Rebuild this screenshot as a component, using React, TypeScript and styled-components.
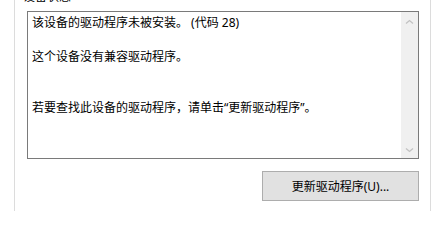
import React from 'react';
import styled, { createGlobalStyle } from 'styled-components';

const GlobalStyle = createGlobalStyle`
  html, body {
    margin: 0;
    background: #ffffff;
    overflow: hidden;
  }
  body {
    font-family: "Noto Sans", "Noto Sans CJK SC", sans-serif;
    font-size: 12px;
    color: #000000;
  }
`;

const Page = styled.div`
  height: 211px;
  padding-left: 14px;
  overflow: hidden;
`;

const GroupBox = styled.div`
  display: flex;
  flex-direction: column;
  box-sizing: border-box;
  width: 417px;
  height: 211px;
  padding: 0 11px 0 12px;
  border-left: 1px solid #dcdcdc;
  border-right: 1px solid #dcdcdc;
`;

const Caption = styled.div`
  margin: -9px 0 0 -4px;
  height: 12px;
  line-height: 12px;
  font-size: 12px;
`;

const MessageBox = styled.div`
  display: flex;
  box-sizing: border-box;
  height: 148px;
  margin-top: 8px;
  border: 1px solid #7a7a7a;
  background: #ffffff;
`;

const MessageText = styled.div`
  flex: 1;
  padding: 2px 4px;
  font-size: 12px;
  line-height: 17px;
  white-space: pre-wrap;
`;

const ScrollBar = styled.div`
  display: flex;
  flex-direction: column;
  justify-content: space-between;
  width: 17px;
  background: #f0f0f0;
`;

const ArrowButton = styled.div`
  display: flex;
  align-items: center;
  justify-content: center;
  height: 17px;
  padding-top: ${({ $down }: { $down?: boolean }) => ($down ? '0' : '2px')};
  box-sizing: border-box;
`;

const Footer = styled.div`
  display: flex;
  justify-content: flex-end;
  margin-top: 12px;
`;

const Button = styled.button`
  width: 157px;
  height: 30px;
  padding: 0;
  background: #e1e1e1;
  border: 1px solid #adadad;
  font-family: "Noto Sans", "Noto Sans CJK SC", sans-serif;
  font-size: 12px;
  color: #000000;
`;

const Chevron = ({ down }: { down?: boolean }) => (
  <svg width="9" height="6" viewBox="0 0 9 6">
    <polyline
      points={down ? '1,1.5 4.5,4.5 8,1.5' : '1,4.5 4.5,1.5 8,4.5'}
      fill="none"
      stroke="#c2c2c2"
      strokeWidth="1.3"
    />
  </svg>
);

const message =
  '该设备的驱动程序未被安装。 (代码 28)\n\n这个设备没有兼容驱动程序。\n\n\n若要查找此设备的驱动程序，请单击“更新驱动程序”。';

const App = () => {
  return (
    <Page>
      <GlobalStyle />
      <GroupBox>
        <Caption>设备状态</Caption>
        <MessageBox>
          <MessageText>{message}</MessageText>
          <ScrollBar>
            <ArrowButton>
              <Chevron />
            </ArrowButton>
            <ArrowButton $down>
              <Chevron down />
            </ArrowButton>
          </ScrollBar>
        </MessageBox>
        <Footer>
          <Button>更新驱动程序(U)...</Button>
        </Footer>
      </GroupBox>
    </Page>
  );
};

export default App;
